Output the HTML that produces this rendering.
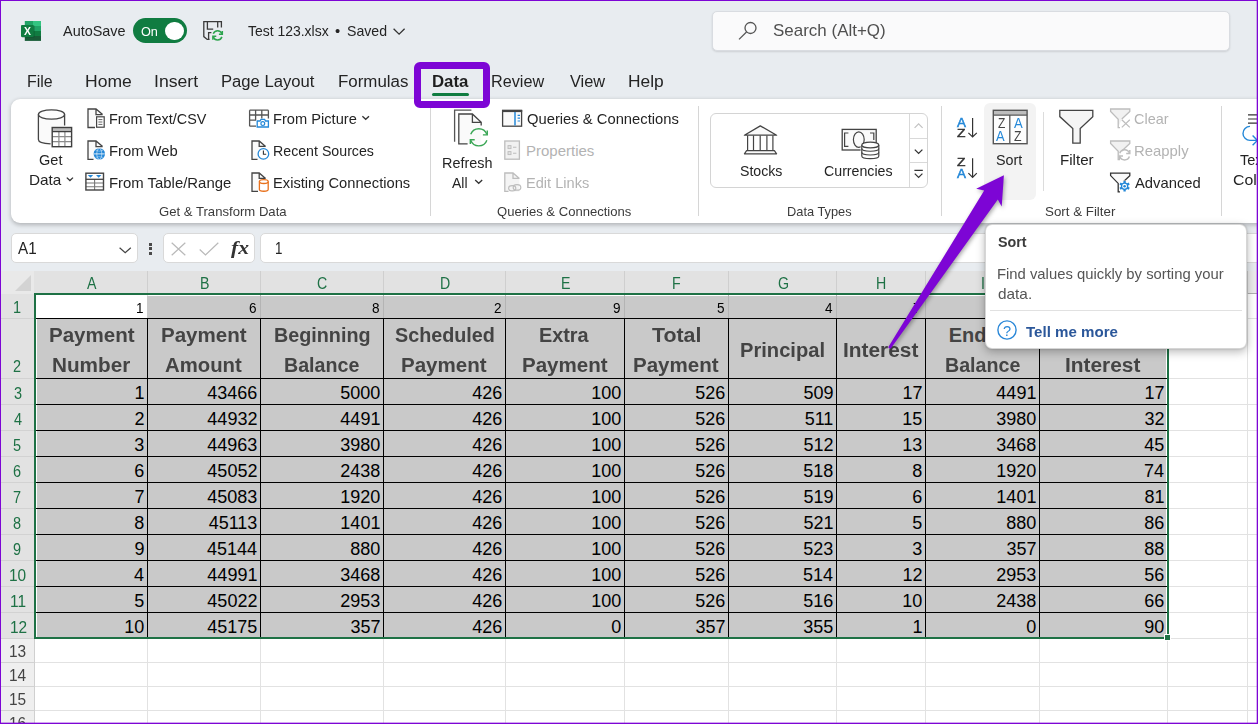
<!DOCTYPE html>
<html><head><meta charset="utf-8"><title>Excel</title>
<style>
html,body{margin:0;padding:0;}
body{width:1258px;height:724px;overflow:hidden;position:relative;background:#e8ecf0;font-family:"Liberation Sans",sans-serif;}
.t{position:absolute;white-space:pre;line-height:1em;transform-origin:0 0;display:block;}
.b{position:absolute;box-sizing:border-box;display:block;}
svg{overflow:visible;}
</style></head><body>
<span class="t" style="left:62.50px;top:23px;font-size:15px;color:#242424;transform:scaleX(0.9624);">AutoSave</span>
<div class="b" style="left:133px;top:18px;width:54px;height:25px;background:#107c41;border-radius:12.5px;"></div>
<span class="t" style="left:141.13px;top:26px;font-size:12.5px;color:#fff;transform:scaleX(1.0146);">On</span>
<div class="b" style="left:165px;top:21.5px;width:18.5px;height:18.5px;background:#fff;border-radius:50%;"></div>
<span class="t" style="left:248.22px;top:23px;font-size:15px;color:#242424;transform:scaleX(0.9299);">Test 123.xlsx</span>
<span class="t" style="left:335.11px;top:23px;font-size:15px;color:#242424;transform:scaleX(0.9877);">•</span>
<span class="t" style="left:346.96px;top:23px;font-size:15px;color:#242424;transform:scaleX(0.9426);">Saved</span>
<svg class="b" style="left:392.6px;top:27.6px;" width="12" height="8" viewBox="0 0 12 8"><path d="M0.6 0.7 L6.1 6.2 L11.6 0.7" fill="none" stroke="#333" stroke-width="1.3"/></svg>
<div class="b" style="left:712px;top:11px;width:518px;height:39.5px;background:#fafafb;border:1px solid #d9dce1;border-radius:5px;box-shadow:0 1px 2px rgba(0,0,0,0.12);"></div>
<span class="t" style="left:773.24px;top:22px;font-size:17px;color:#505050;transform:scaleX(0.9984);">Search (Alt+Q)</span>
<span class="t" style="left:27.43px;top:74px;font-size:16px;color:#242424;transform:scaleX(0.9941);">File</span>
<span class="t" style="left:84.60px;top:74px;font-size:16px;color:#242424;transform:scaleX(1.0953);">Home</span>
<span class="t" style="left:154.01px;top:74px;font-size:16px;color:#242424;transform:scaleX(1.1019);">Insert</span>
<span class="t" style="left:221.17px;top:74px;font-size:16px;color:#242424;transform:scaleX(1.0398);">Page Layout</span>
<span class="t" style="left:338.15px;top:74px;font-size:16px;color:#242424;transform:scaleX(1.0558);">Formulas</span>
<span class="t" style="left:431.51px;top:74px;font-size:16px;color:#1f1f1f;font-weight:bold;transform:scaleX(1.0486);">Data</span>
<span class="t" style="left:491.10px;top:74px;font-size:16px;color:#242424;transform:scaleX(1.0137);">Review</span>
<span class="t" style="left:569.62px;top:74px;font-size:16px;color:#242424;transform:scaleX(1.0227);">View</span>
<span class="t" style="left:628.41px;top:74px;font-size:16px;color:#242424;transform:scaleX(1.0853);">Help</span>
<div class="b" style="left:11px;top:99px;width:1260px;height:123.5px;background:#fff;border-radius:9px;box-shadow:0 1.5px 4px rgba(0,0,0,0.24);"></div>
<div class="b" style="left:432px;top:93px;width:36.5px;height:3.4px;background:#107c41;border-radius:2px;"></div>
<div class="b" style="left:414px;top:62px;width:76px;height:46px;border:7.5px solid #7d05d5;border-radius:6px;"></div>
<div class="b" style="left:430px;top:108px;width:1px;height:108px;background:#d6d6d6;"></div>
<div class="b" style="left:698px;top:106px;width:1px;height:110px;background:#d6d6d6;"></div>
<div class="b" style="left:941px;top:106px;width:1px;height:110px;background:#d6d6d6;"></div>
<div class="b" style="left:1221px;top:106px;width:1px;height:110px;background:#d6d6d6;"></div>
<div class="b" style="left:1043px;top:112px;width:1px;height:79px;background:#dcdcdc;"></div>
<span class="t" style="left:159.14px;top:205px;font-size:13px;color:#3b3b3b;transform:scaleX(1.0092);">Get &amp; Transform Data</span>
<span class="t" style="left:496.91px;top:205px;font-size:13px;color:#3b3b3b;transform:scaleX(1.0048);">Queries &amp; Connections</span>
<span class="t" style="left:787.28px;top:205px;font-size:13px;color:#3b3b3b;transform:scaleX(0.9856);">Data Types</span>
<span class="t" style="left:1045.40px;top:205px;font-size:13px;color:#3b3b3b;transform:scaleX(1.0256);">Sort &amp; Filter</span>
<span class="t" style="left:39.47px;top:152px;font-size:15px;color:#242424;transform:scaleX(0.9689);">Get</span>
<span class="t" style="left:28.57px;top:172px;font-size:15px;color:#242424;transform:scaleX(1.0221);">Data</span>
<span class="t" style="left:109.25px;top:111px;font-size:15px;color:#242424;transform:scaleX(0.9601);">From Text/CSV</span>
<span class="t" style="left:109.22px;top:143px;font-size:15px;color:#242424;transform:scaleX(0.9860);">From Web</span>
<span class="t" style="left:109.21px;top:175px;font-size:15px;color:#242424;transform:scaleX(0.9928);">From Table/Range</span>
<span class="t" style="left:273.33px;top:111px;font-size:15px;color:#242424;transform:scaleX(0.9762);">From Picture</span>
<span class="t" style="left:273.37px;top:143px;font-size:15px;color:#242424;transform:scaleX(0.9457);">Recent Sources</span>
<span class="t" style="left:273.32px;top:175px;font-size:15px;color:#242424;transform:scaleX(0.9792);">Existing Connections</span>
<span class="t" style="left:442.05px;top:155px;font-size:15px;color:#242424;transform:scaleX(0.9603);">Refresh</span>
<span class="t" style="left:452.00px;top:175px;font-size:15px;color:#242424;transform:scaleX(0.9314);">All</span>
<span class="t" style="left:526.54px;top:111px;font-size:15px;color:#242424;transform:scaleX(0.9845);">Queries &amp; Connections</span>
<span class="t" style="left:526.00px;top:143px;font-size:15px;color:#b3b3b3;">Properties</span>
<span class="t" style="left:526.03px;top:175px;font-size:15px;color:#b3b3b3;transform:scaleX(0.9731);">Edit Links</span>
<div class="b" style="left:710px;top:113px;width:218px;height:75px;background:#fff;border:1px solid #d4d4d4;border-radius:6px;"></div>
<div class="b" style="left:909px;top:114px;width:1px;height:73px;background:#d9d9d9;"></div>
<div class="b" style="left:910px;top:138px;width:17px;height:1px;background:#d9d9d9;"></div>
<div class="b" style="left:910px;top:162px;width:17px;height:1px;background:#d9d9d9;"></div>
<span class="t" style="left:740.06px;top:163px;font-size:15px;color:#242424;transform:scaleX(0.9429);">Stocks</span>
<span class="t" style="left:824.49px;top:163px;font-size:15px;color:#242424;transform:scaleX(0.9460);">Currencies</span>
<div class="b" style="left:984px;top:102.5px;width:52px;height:97.5px;background:#f3f3f3;border-radius:6px;"></div>
<span class="t" style="left:995.86px;top:152px;font-size:15px;color:#242424;transform:scaleX(0.9551);">Sort</span>
<span class="t" style="left:1059.69px;top:152px;font-size:15px;color:#242424;transform:scaleX(1.0078);">Filter</span>
<span class="t" style="left:1134.48px;top:111px;font-size:15px;color:#b3b3b3;transform:scaleX(0.9634);">Clear</span>
<span class="t" style="left:1134.01px;top:143px;font-size:15px;color:#b3b3b3;transform:scaleX(0.9916);">Reapply</span>
<span class="t" style="left:1135.20px;top:175px;font-size:15px;color:#242424;transform:scaleX(0.9852);">Advanced</span>
<span class="t" style="left:1240.21px;top:152px;font-size:15px;color:#242424;transform:scaleX(0.9705);">Text to</span>
<span class="t" style="left:1233.11px;top:172px;font-size:15px;color:#242424;transform:scaleX(1.0553);">Columns</span>
<svg class="b" style="left:0;top:0;pointer-events:none" width="1258" height="724" viewBox="0 0 1258 724"><rect x="24.8" y="21" width="8.2" height="5" fill="#21a366"/><rect x="33" y="21" width="8" height="5" fill="#33c481"/><rect x="24.8" y="26" width="8.2" height="5" fill="#107c41"/><rect x="33" y="26" width="8" height="5" fill="#21a366"/><rect x="24.8" y="31" width="8.2" height="5" fill="#185c37"/><rect x="33" y="31" width="8" height="5" fill="#107c41"/><rect x="24.8" y="36" width="16.2" height="4.9" fill="#185c37"/><rect x="21.6" y="25.6" width="13" height="12" rx="1" fill="#0b4a2b" opacity="0.45"/><rect x="21" y="25" width="12.7" height="12" rx="1" fill="#107c41"/><path d="M221.4 27.6 V21.7 H203.8 V36.6 L207.2 39.4 H209.6 M207.4 21.7 V29.2 H213.2 M217.7 21.7 V27.6 M211.4 32.6 H208.6 V39.4" fill="none" stroke="#3a3a3a" stroke-width="1.3" /><path d="M213.28 33.73 A4.6 4.6 0 0 1 221.92 33.73 M221.92 36.87 A4.6 4.6 0 0 1 213.28 36.87" fill="none" stroke="#2da44e" stroke-width="1.5" /><path d="M222.32 30.93 V34.23 H218.92" fill="none" stroke="#2da44e" stroke-width="1.5" /><path d="M212.88 39.67 V36.37 H216.28" fill="none" stroke="#2da44e" stroke-width="1.5" /><circle cx="750.5" cy="28" r="5.5" fill="none" stroke="#555" stroke-width="1.3"/><path d="M746.5 32 L739 39.4" fill="none" stroke="#555" stroke-width="1.3" /><path d="M38.4 114.5 V139.6 C38.4 142 43.5 143.6 50.8 143.9 L64.6 125.5 V114.5 Z" fill="#fafafa" stroke="none"/><ellipse cx="51.5" cy="114.5" rx="13.1" ry="4.7" fill="#fcfcfc" stroke="#444" stroke-width="1.3"/><path d="M38.4 114.5 V139.6 C38.4 142 43.5 143.7 50.6 143.9 M64.6 114.5 V125.6" fill="none" stroke="#444" stroke-width="1.3" /><rect x="52.2" y="127.5" width="19.4" height="19.2" fill="#fff"/><rect x="52.2" y="127.5" width="19.4" height="4" fill="#bdbdbd"/><path d="M58.9 131.5 V146.7 M64.9 131.5 V146.7 M52.2 136.7 H71.6 M52.2 141.6 H71.6" fill="none" stroke="#8c8c8c" stroke-width="1.2" /><path d="M52.2 131.6 H71.6" fill="none" stroke="#3f3f3f" stroke-width="1.3" /><rect x="52.2" y="127.5" width="19.4" height="19.2" fill="none" stroke="#3f3f3f" stroke-width="1.4"/><path d="M88 109 H96.0 L102.6 114.6 V127.5 H88 Z" fill="#fafafa" stroke="none"/><path d="M95 127.5 H88 V109 H96.0 L102.6 114.6 M96.0 109 V114.6 H102.6" fill="none" stroke="#444" stroke-width="1.3" /><rect x="96.6" y="116.8" width="7.6" height="10.4" fill="#fff" stroke="#444" stroke-width="1.2"/><path d="M98.4 119.6 H102.4 M98.4 122 H102.4 M98.4 124.4 H102.4" fill="none" stroke="#666" stroke-width="1" /><path d="M88 141 H96.0 L102.6 146.6 V159.4 H88 Z" fill="#fafafa" stroke="none"/><path d="M93.5 159.4 H88 V141 H96.0 L102.6 146.6 M96.0 141 V146.6 H102.6" fill="none" stroke="#444" stroke-width="1.3" /><circle cx="99.3" cy="153.9" r="5.7" fill="#2488d8"/><path d="M93.8 153.9 H104.8" fill="none" stroke="#fff" stroke-width="0.9" opacity="0.9"/><path d="M95.6 150.4 Q99.3 152 103 150.4 M95.6 157.4 Q99.3 155.8 103 157.4" fill="none" stroke="#fff" stroke-width="0.6" opacity="0.6"/><ellipse cx="99.3" cy="153.9" rx="2.5" ry="5.5" fill="none" stroke="#fff" stroke-width="0.7" opacity="0.75"/><rect x="85.9" y="173.2" width="17.6" height="16.8" fill="#fff"/><path d="M85.9 183 H103.5 M85.9 186.7 H103.5 M94.6 179.3 V190" fill="none" stroke="#777" stroke-width="1.1" /><path d="M87.8 174.9 H93.2 L90.5 177.7 Z M96 174.9 H101.4 L98.7 177.7 Z" fill="#2488d8"/><path d="M85.9 179.3 H103.5" fill="none" stroke="#444" stroke-width="1.3" /><rect x="85.9" y="173.2" width="17.6" height="16.8" fill="none" stroke="#444" stroke-width="1.4"/><path d="M249.6 110.2 H268.4 M249.6 115 H268.4 M249.6 120.2 H256 M249.6 126.2 H256 M249.6 110.2 V126.2 M255.6 110.2 V120 M261.8 110.2 V118.5 M268.4 110.2 V118.5" fill="none" stroke="#555" stroke-width="1.3" /><path d="M257.2 121 H260 L261 119.4 H264.6 L265.6 121 H268.4 V127 H257.2 Z" fill="#fff" stroke="#2488d8" stroke-width="1.3"/><circle cx="262.8" cy="123.6" r="1.9" fill="none" stroke="#2488d8" stroke-width="1.2"/><path d="M252 141 H259.20000000000005 L265.6 146.4 V159.4 H252 Z" fill="#fafafa" stroke="none"/><path d="M257.5 159.4 H252 V141 H259.20000000000005 L265.6 146.4 M259.20000000000005 141 V146.4 H265.6" fill="none" stroke="#444" stroke-width="1.3" /><circle cx="263.4" cy="153.9" r="5.3" fill="#fff" stroke="#2488d8" stroke-width="1.3"/><path d="M263.4 150.6 V154.2 H266.2" fill="none" stroke="#333" stroke-width="1.1" /><path d="M252 173 H259.20000000000005 L265.6 178.4 V191.4 H252 Z" fill="#fafafa" stroke="none"/><path d="M258 191.4 H252 V173 H259.20000000000005 L265.6 178.4 M259.20000000000005 173 V178.4 H265.6" fill="none" stroke="#444" stroke-width="1.3" /><path d="M259.4 181.6 V189.6 C259.4 191.8 268.2 191.8 268.2 189.6 V181.6" fill="#fff" stroke="#e8711c" stroke-width="1.3"/><ellipse cx="263.8" cy="181.6" rx="4.4" ry="1.9" fill="#fff" stroke="#e8711c" stroke-width="1.3"/><path d="M362.4 116.2 L365.7 119.33500000000001 L369 116.2" fill="none" stroke="#333" stroke-width="1.3" /><path d="M66.8 177.6 L69.9 180.545 L73 177.6" fill="none" stroke="#333" stroke-width="1.3" /><path d="M475.2 180 L478.7 183.325 L482.2 180" fill="none" stroke="#333" stroke-width="1.3" /><path d="M471.4 110.2 H454.6 V141.8" fill="none" stroke="#555" stroke-width="1.3" /><path d="M458.8 114 H472.4 L481.2 122.4 V143.8 H458.8 Z" fill="#fafafa"/><path d="M467.6 143.8 H458.8 V114 H472.4 L481.2 122.4 V125.6 M472.4 114 V122.4 H481.2" fill="none" stroke="#444" stroke-width="1.3" /><path d="M470.72 134.36 A8.6 8.6 0 0 1 486.88 134.36 M486.88 140.24 A8.6 8.6 0 0 1 470.72 140.24" fill="none" stroke="#3aa655" stroke-width="1.4" /><path d="M487.28 130.56 V134.86 H482.88" fill="none" stroke="#3aa655" stroke-width="1.4" /><path d="M470.32 144.04 V139.74 H474.72" fill="none" stroke="#3aa655" stroke-width="1.4" /><rect x="502.6" y="110.4" width="19" height="15.8" fill="#fafafa" stroke="#444" stroke-width="1.3"/><path d="M502 111 H522.2" fill="none" stroke="#444" stroke-width="2.2" /><path d="M515 112 V125.6" fill="none" stroke="#2488d8" stroke-width="1.5" /><path d="M517.6 115.4 H520 M517.6 118.2 H520 M517.6 121 H520" fill="none" stroke="#2488d8" stroke-width="1.2" /><rect x="504.8" y="141" width="14.6" height="18.2" fill="#f1f1f1" stroke="#bdbdbd" stroke-width="1.3"/><rect x="508" y="145.6" width="3" height="3" fill="#e2e2e2" stroke="#bdbdbd" stroke-width="0.9"/><rect x="508" y="151.6" width="3" height="3" fill="#e2e2e2" stroke="#bdbdbd" stroke-width="0.9"/><path d="M513 147.2 H516.4 M513 153.2 H516.4" fill="none" stroke="#bdbdbd" stroke-width="1.1" /><path d="M504.8 173 H513.0 L519.4 178.4 V191.4 H504.8 Z" fill="#f4f4f4" stroke="none"/><path d="M508.5 191.4 H504.8 V173 H513.0 L519.4 178.4 M513.0 173 V178.4 H519.4" fill="none" stroke="#bdbdbd" stroke-width="1.3" /><ellipse cx="512.2" cy="188.2" rx="3.6" ry="2.6" fill="#f4f4f4" stroke="#bdbdbd" stroke-width="1.2"/><ellipse cx="517" cy="187.4" rx="3.8" ry="2.8" fill="none" stroke="#bdbdbd" stroke-width="1.2"/><path d="M744.4 135.2 L760.3 125.9 L776.6 135.2 Z" fill="#fafafa" stroke="#444" stroke-width="1.3" stroke-linejoin="round"/><path d="M747.6 135.4 V150.4 M753.5 135.4 V150.4 M760.2 135.4 V150.4 M766.9 135.4 V150.4 M772.9 135.4 V150.4" fill="none" stroke="#444" stroke-width="1.2" /><path d="M746.6 150.6 H774.4 L776.6 153.8 H744.4 Z" fill="#fafafa" stroke="#444" stroke-width="1.2" stroke-linejoin="round"/><rect x="842.2" y="129.4" width="34" height="20.6" fill="#fafafa" stroke="#444" stroke-width="1.3"/><path d="M848.4 133 H844.6 V146.4 H848.4 M870 133 H873.8 V140" fill="none" stroke="#444" stroke-width="1.2" /><ellipse cx="858.8" cy="139.6" rx="5.4" ry="7.8" fill="none" stroke="#444" stroke-width="1.2"/><path d="M861.8 145 V156 C861.8 159.6 878.8 159.6 878.8 156 V145 Z" fill="#fff" stroke="#fff" stroke-width="2.4"/><path d="M861.8 145 V156 C861.8 159.6 878.8 159.6 878.8 156 V145" fill="#fff" stroke="#444" stroke-width="1.2"/><path d="M861.8 148.6 C861.8 152.2 878.8 152.2 878.8 148.6 M861.8 152.3 C861.8 155.9 878.8 155.9 878.8 152.3" fill="none" stroke="#444" stroke-width="1.1" /><ellipse cx="870.3" cy="145" rx="8.5" ry="2.9" fill="#fff" stroke="#444" stroke-width="1.2"/><path d="M914.6 127.8 L918.6 123.8 L922.6 127.8" fill="none" stroke="#c2c2c2" stroke-width="1.2" /><path d="M914.8 149.6 L918.6 153.4 L922.4 149.6" fill="none" stroke="#333" stroke-width="1.3" /><path d="M914.4 170.4 H922.8 M914.8 173.6 L918.6 177.4 L922.4 173.6" fill="none" stroke="#333" stroke-width="1.2" /><path d="M972.6 118 V136.8 M968.4 132.8 L972.6 137 L976.8 132.8" fill="none" stroke="#333" stroke-width="1.2" /><path d="M972.6 158.2 V177.2 M968.4 173.2 L972.6 177.4 L976.8 173.2" fill="none" stroke="#333" stroke-width="1.2" /><rect x="993.3" y="110.3" width="33.8" height="33.4" fill="#fdfdfd"/><rect x="993.3" y="110.3" width="33.8" height="4.6" fill="#bdbdbd"/><path d="M993.3 115.2 H1027.1 M1009.8 115.2 V143.7" fill="none" stroke="#555" stroke-width="1.3" /><rect x="993.3" y="110.3" width="33.8" height="33.4" fill="none" stroke="#555" stroke-width="1.4"/><path d="M1059.8 110.4 H1092.8 V116.6 L1080.2 128.6 V143.2 H1072.8 V128.6 L1059.8 116.6 Z" fill="#f5f5f5" stroke="#444" stroke-width="1.3" stroke-linejoin="miter"/><path d="M1110.6 109 H1129.8 V111.2 L1121.6 119.4 L1118.1999999999998 127.6 V119.4 L1110.6 111.2 Z" fill="#f1f1f1" stroke="none"/><path d="M1121.8 119 L1129.8 111.4 V109 H1110.6 V111.4 L1118.1999999999998 119.2 V127.6 H1120.0" fill="none" stroke="#bdbdbd" stroke-width="1.3" /><path d="M1121.8 119.8 L1129.8 127.4 M1129.8 119.8 L1121.8 127.4" fill="none" stroke="#bdbdbd" stroke-width="1.2" /><path d="M1110.6 141 H1129.8 V143.2 L1121.6 151.4 L1118.1999999999998 159.6 V151.4 L1110.6 143.2 Z" fill="#f1f1f1" stroke="none"/><path d="M1121.8 151 L1129.8 143.4 V141 H1110.6 V143.4 L1118.1999999999998 151.2 V159.6 H1120.0" fill="none" stroke="#bdbdbd" stroke-width="1.3" /><path d="M1119.81 153.06 A5.1 5.1 0 0 1 1129.39 153.06 M1129.39 156.54 A5.1 5.1 0 0 1 1119.81 156.54" fill="none" stroke="#bdbdbd" stroke-width="1.5" /><path d="M1129.79 150.06 V153.56 H1126.19" fill="none" stroke="#bdbdbd" stroke-width="1.5" /><path d="M1119.41 159.54 V156.04 H1123.01" fill="none" stroke="#bdbdbd" stroke-width="1.5" /><path d="M1110.6 173.2 H1129.8 V175.39999999999998 L1121.6 183.6 L1118.1999999999998 191.79999999999998 V183.6 L1110.6 175.39999999999998 Z" fill="#fafafa" stroke="none"/><path d="M1121.8 183.2 L1129.8 175.6 V173.2 H1110.6 V175.6 L1118.1999999999998 183.39999999999998 V191.79999999999998 H1120.0" fill="none" stroke="#333" stroke-width="1.3" /><circle cx="1124.6" cy="186.2" r="5.6" fill="#fff"/><path d="M1126.51 187.30 L1129.19 188.85 M1124.60 188.40 L1124.60 191.50 M1122.69 187.30 L1120.01 188.85 M1122.69 185.10 L1120.01 183.55 M1124.60 184.00 L1124.60 180.90 M1126.51 185.10 L1129.19 183.55 " fill="none" stroke="#2488d8" stroke-width="2.3" /><circle cx="1124.6" cy="186.2" r="3.1" fill="#fff" stroke="#2488d8" stroke-width="1.3"/><circle cx="1124.6" cy="186.2" r="1.3" fill="#2488d8"/><path d="M1248 114.8 H1258 M1248 119 H1258 M1248 123.2 H1258" fill="none" stroke="#333" stroke-width="1.2" /><path d="M1250 126.4 A7 7 0 1 0 1250 140.4 H1257 M1252.6 135.6 L1257.4 140.4 L1252.6 145.2" fill="none" stroke="#2488d8" stroke-width="1.4" /></svg>
<span class="t" style="left:23.90px;top:26px;font-size:10.5px;color:#fff;font-weight:bold;transform:scaleX(0.9963);">X</span>
<span class="t" style="left:956.90px;top:117px;font-size:12.5px;color:#2488d8;transform:scaleX(1.0707);-webkit-text-stroke:0.5px #2488d8;">A</span>
<span class="t" style="left:956.79px;top:128px;font-size:11px;color:#333;transform:scaleX(1.2562);-webkit-text-stroke:0.5px #333;">Z</span>
<span class="t" style="left:956.79px;top:157px;font-size:11px;color:#333;transform:scaleX(1.2562);-webkit-text-stroke:0.5px #333;">Z</span>
<span class="t" style="left:956.90px;top:168px;font-size:12.5px;color:#2488d8;transform:scaleX(1.0707);-webkit-text-stroke:0.5px #2488d8;">A</span>
<span class="t" style="left:997.64px;top:117px;font-size:13.75px;color:#444;transform:scaleX(0.8727);">Z</span>
<span class="t" style="left:996.40px;top:130px;font-size:13.75px;color:#2488d8;transform:scaleX(0.9405);">A</span>
<span class="t" style="left:1013.70px;top:117px;font-size:13.75px;color:#2488d8;transform:scaleX(0.9515);">A</span>
<span class="t" style="left:1013.83px;top:130px;font-size:13.75px;color:#444;transform:scaleX(0.8992);">Z</span>
<div class="b" style="left:11px;top:233px;width:126.5px;height:30px;background:#fff;border:1px solid #d9d9d9;border-radius:5px;"></div>
<span class="t" style="left:18.10px;top:241px;font-size:15.75px;color:#242424;transform:scaleX(0.9672);">A1</span>
<svg class="b" style="left:119px;top:247px;" width="13" height="7" viewBox="0 0 13 7"><path d="M0.6 0.7 L6.2 5.8 L11.8 0.7" fill="none" stroke="#444" stroke-width="1.2"/></svg>
<div class="b" style="left:149px;top:242.6px;width:3px;height:3px;background:#4a4a4a;"></div>
<div class="b" style="left:149px;top:247.2px;width:3px;height:3px;background:#4a4a4a;"></div>
<div class="b" style="left:149px;top:251.8px;width:3px;height:3px;background:#4a4a4a;"></div>
<div class="b" style="left:163px;top:233px;width:91.5px;height:30px;background:#fff;border:1px solid #d9d9d9;border-radius:5px;"></div>
<svg class="b" style="left:171px;top:241.5px;" width="15" height="14" viewBox="0 0 15 14"><path d="M0.7 0.7 L14.3 13.3 M14.3 0.7 L0.7 13.3" fill="none" stroke="#b9b9b9" stroke-width="1.2"/></svg>
<svg class="b" style="left:199px;top:241.5px;" width="20" height="14" viewBox="0 0 20 14"><path d="M0.7 7.5 L6.5 13 L19.3 0.8" fill="none" stroke="#b9b9b9" stroke-width="1.2"/></svg>
<span class="t" style="left:230.50px;top:238px;font-size:19px;color:#333;font-weight:bold;font-style:italic;font-family:'Liberation Serif',serif;transform:scaleX(1.1371);">fx</span>
<div class="b" style="left:260px;top:233px;width:1010px;height:30px;background:#fff;border:1px solid #d9d9d9;border-radius:5px;"></div>
<span class="t" style="left:274.50px;top:241px;font-size:15.75px;color:#242424;transform:scaleX(0.8466);">1</span>
<div class="b" style="left:1px;top:271px;width:1256px;height:460px;background:#fff;"></div>
<div class="b" style="left:1px;top:271px;width:1256px;height:23px;background:#e2e2e2;"></div>
<div class="b" style="left:1168px;top:271px;width:100px;height:23px;background:#ebebeb;"></div>
<div class="b" style="left:1169px;top:293px;width:100px;height:1px;background:#b0b0b0;"></div>
<div class="b" style="left:1px;top:294px;width:33px;height:344px;background:#e2e2e2;"></div>
<div class="b" style="left:1px;top:638px;width:33px;height:100px;background:#efefef;"></div>
<div class="b" style="left:1px;top:271px;width:33px;height:23px;background:#e9e9e9;"></div>
<svg class="b" style="left:15px;top:275px;" width="16" height="16" viewBox="0 0 16 16"><path d="M16 0 L16 16 L0 16 Z" fill="#d3d3d3"/></svg>
<div class="b" style="left:147px;top:294px;width:1px;height:440px;background:#e2e2e2;"></div>
<div class="b" style="left:260px;top:294px;width:1px;height:440px;background:#e2e2e2;"></div>
<div class="b" style="left:383px;top:294px;width:1px;height:440px;background:#e2e2e2;"></div>
<div class="b" style="left:505px;top:294px;width:1px;height:440px;background:#e2e2e2;"></div>
<div class="b" style="left:624px;top:294px;width:1px;height:440px;background:#e2e2e2;"></div>
<div class="b" style="left:728px;top:294px;width:1px;height:440px;background:#e2e2e2;"></div>
<div class="b" style="left:836px;top:294px;width:1px;height:440px;background:#e2e2e2;"></div>
<div class="b" style="left:925px;top:294px;width:1px;height:440px;background:#e2e2e2;"></div>
<div class="b" style="left:1039px;top:294px;width:1px;height:440px;background:#e2e2e2;"></div>
<div class="b" style="left:1167px;top:294px;width:1px;height:440px;background:#e2e2e2;"></div>
<div class="b" style="left:1247px;top:294px;width:1px;height:440px;background:#e2e2e2;"></div>
<div class="b" style="left:34px;top:318px;width:1230px;height:1px;background:#e2e2e2;"></div>
<div class="b" style="left:34px;top:378px;width:1230px;height:1px;background:#e2e2e2;"></div>
<div class="b" style="left:34px;top:404px;width:1230px;height:1px;background:#e2e2e2;"></div>
<div class="b" style="left:34px;top:430px;width:1230px;height:1px;background:#e2e2e2;"></div>
<div class="b" style="left:34px;top:456px;width:1230px;height:1px;background:#e2e2e2;"></div>
<div class="b" style="left:34px;top:482px;width:1230px;height:1px;background:#e2e2e2;"></div>
<div class="b" style="left:34px;top:508px;width:1230px;height:1px;background:#e2e2e2;"></div>
<div class="b" style="left:34px;top:534px;width:1230px;height:1px;background:#e2e2e2;"></div>
<div class="b" style="left:34px;top:560px;width:1230px;height:1px;background:#e2e2e2;"></div>
<div class="b" style="left:34px;top:586px;width:1230px;height:1px;background:#e2e2e2;"></div>
<div class="b" style="left:34px;top:612px;width:1230px;height:1px;background:#e2e2e2;"></div>
<div class="b" style="left:34px;top:638px;width:1230px;height:1px;background:#e2e2e2;"></div>
<div class="b" style="left:34px;top:662px;width:1230px;height:1px;background:#e2e2e2;"></div>
<div class="b" style="left:34px;top:686px;width:1230px;height:1px;background:#e2e2e2;"></div>
<div class="b" style="left:34px;top:710px;width:1230px;height:1px;background:#e2e2e2;"></div>
<div class="b" style="left:147px;top:271px;width:1px;height:23px;background:#cfcfcf;"></div>
<div class="b" style="left:260px;top:271px;width:1px;height:23px;background:#cfcfcf;"></div>
<div class="b" style="left:383px;top:271px;width:1px;height:23px;background:#cfcfcf;"></div>
<div class="b" style="left:505px;top:271px;width:1px;height:23px;background:#cfcfcf;"></div>
<div class="b" style="left:624px;top:271px;width:1px;height:23px;background:#cfcfcf;"></div>
<div class="b" style="left:728px;top:271px;width:1px;height:23px;background:#cfcfcf;"></div>
<div class="b" style="left:836px;top:271px;width:1px;height:23px;background:#cfcfcf;"></div>
<div class="b" style="left:925px;top:271px;width:1px;height:23px;background:#cfcfcf;"></div>
<div class="b" style="left:1039px;top:271px;width:1px;height:23px;background:#cfcfcf;"></div>
<div class="b" style="left:1167px;top:271px;width:1px;height:23px;background:#cfcfcf;"></div>
<div class="b" style="left:1247px;top:271px;width:1px;height:23px;background:#cfcfcf;"></div>
<div class="b" style="left:1px;top:318px;width:33px;height:1px;background:#d2d2d2;"></div>
<div class="b" style="left:1px;top:378px;width:33px;height:1px;background:#d2d2d2;"></div>
<div class="b" style="left:1px;top:404px;width:33px;height:1px;background:#d2d2d2;"></div>
<div class="b" style="left:1px;top:430px;width:33px;height:1px;background:#d2d2d2;"></div>
<div class="b" style="left:1px;top:456px;width:33px;height:1px;background:#d2d2d2;"></div>
<div class="b" style="left:1px;top:482px;width:33px;height:1px;background:#d2d2d2;"></div>
<div class="b" style="left:1px;top:508px;width:33px;height:1px;background:#d2d2d2;"></div>
<div class="b" style="left:1px;top:534px;width:33px;height:1px;background:#d2d2d2;"></div>
<div class="b" style="left:1px;top:560px;width:33px;height:1px;background:#d2d2d2;"></div>
<div class="b" style="left:1px;top:586px;width:33px;height:1px;background:#d2d2d2;"></div>
<div class="b" style="left:1px;top:612px;width:33px;height:1px;background:#d2d2d2;"></div>
<div class="b" style="left:1px;top:638px;width:33px;height:1px;background:#d2d2d2;"></div>
<div class="b" style="left:1px;top:662px;width:33px;height:1px;background:#d2d2d2;"></div>
<div class="b" style="left:1px;top:686px;width:33px;height:1px;background:#d2d2d2;"></div>
<div class="b" style="left:1px;top:710px;width:33px;height:1px;background:#d2d2d2;"></div>
<div class="b" style="left:37px;top:296px;width:1129px;height:341px;background:#c9c9c9;"></div>
<div class="b" style="left:36px;top:295px;width:111px;height:23px;background:#fff;"></div>
<div class="b" style="left:260px;top:295px;width:1px;height:23px;background:#b4b4b4;"></div>
<div class="b" style="left:383px;top:295px;width:1px;height:23px;background:#b4b4b4;"></div>
<div class="b" style="left:505px;top:295px;width:1px;height:23px;background:#b4b4b4;"></div>
<div class="b" style="left:624px;top:295px;width:1px;height:23px;background:#b4b4b4;"></div>
<div class="b" style="left:728px;top:295px;width:1px;height:23px;background:#b4b4b4;"></div>
<div class="b" style="left:836px;top:295px;width:1px;height:23px;background:#b4b4b4;"></div>
<div class="b" style="left:925px;top:295px;width:1px;height:23px;background:#b4b4b4;"></div>
<div class="b" style="left:1039px;top:295px;width:1px;height:23px;background:#b4b4b4;"></div>
<div class="b" style="left:36px;top:318px;width:1131px;height:1px;background:#000;"></div>
<div class="b" style="left:36px;top:378px;width:1131px;height:1px;background:#000;"></div>
<div class="b" style="left:36px;top:404px;width:1131px;height:1px;background:#000;"></div>
<div class="b" style="left:36px;top:430px;width:1131px;height:1px;background:#000;"></div>
<div class="b" style="left:36px;top:456px;width:1131px;height:1px;background:#000;"></div>
<div class="b" style="left:36px;top:482px;width:1131px;height:1px;background:#000;"></div>
<div class="b" style="left:36px;top:508px;width:1131px;height:1px;background:#000;"></div>
<div class="b" style="left:36px;top:534px;width:1131px;height:1px;background:#000;"></div>
<div class="b" style="left:36px;top:560px;width:1131px;height:1px;background:#000;"></div>
<div class="b" style="left:36px;top:586px;width:1131px;height:1px;background:#000;"></div>
<div class="b" style="left:36px;top:612px;width:1131px;height:1px;background:#000;"></div>
<div class="b" style="left:147px;top:318px;width:1px;height:320px;background:#000;"></div>
<div class="b" style="left:260px;top:318px;width:1px;height:320px;background:#000;"></div>
<div class="b" style="left:383px;top:318px;width:1px;height:320px;background:#000;"></div>
<div class="b" style="left:505px;top:318px;width:1px;height:320px;background:#000;"></div>
<div class="b" style="left:624px;top:318px;width:1px;height:320px;background:#000;"></div>
<div class="b" style="left:728px;top:318px;width:1px;height:320px;background:#000;"></div>
<div class="b" style="left:836px;top:318px;width:1px;height:320px;background:#000;"></div>
<div class="b" style="left:925px;top:318px;width:1px;height:320px;background:#000;"></div>
<div class="b" style="left:1039px;top:318px;width:1px;height:320px;background:#000;"></div>
<div class="b" style="left:34px;top:293px;width:1135px;height:2px;background:#1e7145;"></div>
<div class="b" style="left:34px;top:293px;width:2px;height:346px;background:#1e7145;"></div>
<div class="b" style="left:34px;top:637px;width:1132px;height:2px;background:#1e7145;"></div>
<div class="b" style="left:1167px;top:293px;width:2px;height:343px;background:#1e7145;"></div>
<div class="b" style="left:1164px;top:634px;width:7px;height:7px;background:#1e7145;border:1px solid #fff;"></div>
<span class="t" style="left:86.79px;top:276px;font-size:15.75px;color:#1e7145;transform:scaleX(0.9000);">A</span>
<span class="t" style="left:199.57px;top:276px;font-size:15.75px;color:#1e7145;transform:scaleX(0.9000);">B</span>
<span class="t" style="left:317.29px;top:276px;font-size:15.75px;color:#1e7145;transform:scaleX(0.9000);">C</span>
<span class="t" style="left:439.65px;top:276px;font-size:15.75px;color:#1e7145;transform:scaleX(0.9000);">D</span>
<span class="t" style="left:560.50px;top:276px;font-size:15.75px;color:#1e7145;transform:scaleX(0.9000);">E</span>
<span class="t" style="left:672.39px;top:276px;font-size:15.75px;color:#1e7145;transform:scaleX(0.9000);">F</span>
<span class="t" style="left:777.65px;top:276px;font-size:15.75px;color:#1e7145;transform:scaleX(0.9000);">G</span>
<span class="t" style="left:876.40px;top:276px;font-size:15.75px;color:#1e7145;transform:scaleX(0.9000);">H</span>
<span class="t" style="left:981.05px;top:276px;font-size:15.75px;color:#1e7145;transform:scaleX(0.9000);">I</span>
<span class="t" style="left:1100.88px;top:276px;font-size:15.75px;color:#1e7145;transform:scaleX(0.9000);">J</span>
<span class="t" style="left:13.26px;top:300px;font-size:15.75px;color:#1e7145;transform:scaleX(0.9200);">1</span>
<span class="t" style="left:13.44px;top:359px;font-size:15.75px;color:#1e7145;transform:scaleX(0.9200);">2</span>
<span class="t" style="left:13.52px;top:386px;font-size:15.75px;color:#1e7145;transform:scaleX(0.9200);">3</span>
<span class="t" style="left:13.52px;top:412px;font-size:15.75px;color:#1e7145;transform:scaleX(0.9200);">4</span>
<span class="t" style="left:13.48px;top:438px;font-size:15.75px;color:#1e7145;transform:scaleX(0.9200);">5</span>
<span class="t" style="left:13.41px;top:464px;font-size:15.75px;color:#1e7145;transform:scaleX(0.9200);">6</span>
<span class="t" style="left:13.44px;top:490px;font-size:15.75px;color:#1e7145;transform:scaleX(0.9200);">7</span>
<span class="t" style="left:13.48px;top:516px;font-size:15.75px;color:#1e7145;transform:scaleX(0.9200);">8</span>
<span class="t" style="left:13.48px;top:542px;font-size:15.75px;color:#1e7145;transform:scaleX(0.9200);">9</span>
<span class="t" style="left:9.42px;top:568px;font-size:15.75px;color:#1e7145;transform:scaleX(0.9800);">10</span>
<span class="t" style="left:10.08px;top:594px;font-size:15.75px;color:#1e7145;transform:scaleX(0.9800);">11</span>
<span class="t" style="left:9.50px;top:620px;font-size:15.75px;color:#1e7145;transform:scaleX(0.9800);">12</span>
<span class="t" style="left:9.46px;top:644px;font-size:15.75px;color:#444;transform:scaleX(0.9800);">13</span>
<span class="t" style="left:9.35px;top:668px;font-size:15.75px;color:#444;transform:scaleX(0.9800);">14</span>
<span class="t" style="left:9.46px;top:692px;font-size:15.75px;color:#444;transform:scaleX(0.9800);">15</span>
<span class="t" style="left:9.46px;top:716px;font-size:15.75px;color:#444;transform:scaleX(0.9800);">16</span>
<div class="b" style="left:34px;top:639px;width:1px;height:100px;background:#d0d0d0;"></div>
<span class="t" style="left:136.30px;top:301px;font-size:14.25px;color:#000;transform:scaleX(0.9500);">1</span>
<span class="t" style="left:249.23px;top:301px;font-size:14.25px;color:#000;transform:scaleX(0.9500);">6</span>
<span class="t" style="left:372.23px;top:301px;font-size:14.25px;color:#000;transform:scaleX(0.9500);">8</span>
<span class="t" style="left:494.30px;top:301px;font-size:14.25px;color:#000;transform:scaleX(0.9500);">2</span>
<span class="t" style="left:613.30px;top:301px;font-size:14.25px;color:#000;transform:scaleX(0.9500);">9</span>
<span class="t" style="left:717.23px;top:301px;font-size:14.25px;color:#000;transform:scaleX(0.9500);">5</span>
<span class="t" style="left:825.03px;top:301px;font-size:14.25px;color:#000;transform:scaleX(0.9500);">4</span>
<span class="t" style="left:913.10px;top:301px;font-size:14.25px;color:#000;transform:scaleX(0.9500);">7</span>
<span class="t" style="left:48.66px;top:325px;font-size:20px;color:#444444;font-weight:bold;transform:scaleX(1.0270);">Payment</span>
<span class="t" style="left:52.32px;top:355px;font-size:20px;color:#444444;font-weight:bold;transform:scaleX(1.0360);">Number</span>
<span class="t" style="left:160.66px;top:325px;font-size:20px;color:#444444;font-weight:bold;transform:scaleX(1.0270);">Payment</span>
<span class="t" style="left:165.49px;top:355px;font-size:20px;color:#444444;font-weight:bold;transform:scaleX(1.0160);">Amount</span>
<span class="t" style="left:273.79px;top:325px;font-size:20px;color:#444444;font-weight:bold;transform:scaleX(0.9870);">Beginning</span>
<span class="t" style="left:284.00px;top:355px;font-size:20px;color:#444444;font-weight:bold;transform:scaleX(0.9820);">Balance</span>
<span class="t" style="left:394.90px;top:325px;font-size:20px;color:#444444;font-weight:bold;transform:scaleX(0.9880);">Scheduled</span>
<span class="t" style="left:401.16px;top:355px;font-size:20px;color:#444444;font-weight:bold;transform:scaleX(1.0270);">Payment</span>
<span class="t" style="left:539.46px;top:325px;font-size:20px;color:#444444;font-weight:bold;transform:scaleX(0.9920);">Extra</span>
<span class="t" style="left:521.66px;top:355px;font-size:20px;color:#444444;font-weight:bold;transform:scaleX(1.0270);">Payment</span>
<span class="t" style="left:652.44px;top:325px;font-size:20px;color:#444444;font-weight:bold;transform:scaleX(1.0670);">Total</span>
<span class="t" style="left:633.16px;top:355px;font-size:20px;color:#444444;font-weight:bold;transform:scaleX(1.0270);">Payment</span>
<span class="t" style="left:740.05px;top:340px;font-size:20px;color:#444444;font-weight:bold;transform:scaleX(1.0060);">Principal</span>
<span class="t" style="left:842.74px;top:340px;font-size:20px;color:#444444;font-weight:bold;transform:scaleX(1.0440);">Interest</span>
<span class="t" style="left:948.65px;top:325px;font-size:20px;color:#444444;font-weight:bold;">Ending</span>
<span class="t" style="left:944.50px;top:355px;font-size:20px;color:#444444;font-weight:bold;transform:scaleX(0.9820);">Balance</span>
<span class="t" style="left:1049.50px;top:325px;font-size:20px;color:#444444;font-weight:bold;">Cumulative</span>
<span class="t" style="left:1065.24px;top:355px;font-size:20px;color:#444444;font-weight:bold;transform:scaleX(1.0440);">Interest</span>
<span class="t" style="left:134.42px;top:384px;font-size:18px;color:#000;">1</span>
<span class="t" style="left:207.28px;top:384px;font-size:18px;color:#000;">43466</span>
<span class="t" style="left:340.18px;top:384px;font-size:18px;color:#000;">5000</span>
<span class="t" style="left:472.35px;top:384px;font-size:18px;color:#000;">426</span>
<span class="t" style="left:591.26px;top:384px;font-size:18px;color:#000;">100</span>
<span class="t" style="left:695.35px;top:384px;font-size:18px;color:#000;">526</span>
<span class="t" style="left:803.44px;top:384px;font-size:18px;color:#000;">509</span>
<span class="t" style="left:902.43px;top:384px;font-size:18px;color:#000;">17</span>
<span class="t" style="left:996.36px;top:384px;font-size:18px;color:#000;">4491</span>
<span class="t" style="left:1144.43px;top:384px;font-size:18px;color:#000;">17</span>
<span class="t" style="left:134.42px;top:410px;font-size:18px;color:#000;">2</span>
<span class="t" style="left:207.37px;top:410px;font-size:18px;color:#000;">44932</span>
<span class="t" style="left:340.36px;top:410px;font-size:18px;color:#000;">4491</span>
<span class="t" style="left:472.35px;top:410px;font-size:18px;color:#000;">426</span>
<span class="t" style="left:591.26px;top:410px;font-size:18px;color:#000;">100</span>
<span class="t" style="left:695.35px;top:410px;font-size:18px;color:#000;">526</span>
<span class="t" style="left:804.70px;top:410px;font-size:18px;color:#000;">511</span>
<span class="t" style="left:902.34px;top:410px;font-size:18px;color:#000;">15</span>
<span class="t" style="left:996.18px;top:410px;font-size:18px;color:#000;">3980</span>
<span class="t" style="left:1144.43px;top:410px;font-size:18px;color:#000;">32</span>
<span class="t" style="left:134.33px;top:436px;font-size:18px;color:#000;">3</span>
<span class="t" style="left:207.28px;top:436px;font-size:18px;color:#000;">44963</span>
<span class="t" style="left:340.18px;top:436px;font-size:18px;color:#000;">3980</span>
<span class="t" style="left:472.35px;top:436px;font-size:18px;color:#000;">426</span>
<span class="t" style="left:591.26px;top:436px;font-size:18px;color:#000;">100</span>
<span class="t" style="left:695.35px;top:436px;font-size:18px;color:#000;">526</span>
<span class="t" style="left:803.44px;top:436px;font-size:18px;color:#000;">512</span>
<span class="t" style="left:902.34px;top:436px;font-size:18px;color:#000;">13</span>
<span class="t" style="left:996.27px;top:436px;font-size:18px;color:#000;">3468</span>
<span class="t" style="left:1144.34px;top:436px;font-size:18px;color:#000;">45</span>
<span class="t" style="left:134.33px;top:462px;font-size:18px;color:#000;">6</span>
<span class="t" style="left:207.37px;top:462px;font-size:18px;color:#000;">45052</span>
<span class="t" style="left:340.27px;top:462px;font-size:18px;color:#000;">2438</span>
<span class="t" style="left:472.35px;top:462px;font-size:18px;color:#000;">426</span>
<span class="t" style="left:591.26px;top:462px;font-size:18px;color:#000;">100</span>
<span class="t" style="left:695.35px;top:462px;font-size:18px;color:#000;">526</span>
<span class="t" style="left:803.35px;top:462px;font-size:18px;color:#000;">518</span>
<span class="t" style="left:912.33px;top:462px;font-size:18px;color:#000;">8</span>
<span class="t" style="left:996.18px;top:462px;font-size:18px;color:#000;">1920</span>
<span class="t" style="left:1144.07px;top:462px;font-size:18px;color:#000;">74</span>
<span class="t" style="left:134.42px;top:488px;font-size:18px;color:#000;">7</span>
<span class="t" style="left:207.28px;top:488px;font-size:18px;color:#000;">45083</span>
<span class="t" style="left:340.18px;top:488px;font-size:18px;color:#000;">1920</span>
<span class="t" style="left:472.35px;top:488px;font-size:18px;color:#000;">426</span>
<span class="t" style="left:591.26px;top:488px;font-size:18px;color:#000;">100</span>
<span class="t" style="left:695.35px;top:488px;font-size:18px;color:#000;">526</span>
<span class="t" style="left:803.44px;top:488px;font-size:18px;color:#000;">519</span>
<span class="t" style="left:912.33px;top:488px;font-size:18px;color:#000;">6</span>
<span class="t" style="left:996.36px;top:488px;font-size:18px;color:#000;">1401</span>
<span class="t" style="left:1144.43px;top:488px;font-size:18px;color:#000;">81</span>
<span class="t" style="left:134.33px;top:514px;font-size:18px;color:#000;">8</span>
<span class="t" style="left:208.63px;top:514px;font-size:18px;color:#000;">45113</span>
<span class="t" style="left:340.36px;top:514px;font-size:18px;color:#000;">1401</span>
<span class="t" style="left:472.35px;top:514px;font-size:18px;color:#000;">426</span>
<span class="t" style="left:591.26px;top:514px;font-size:18px;color:#000;">100</span>
<span class="t" style="left:695.35px;top:514px;font-size:18px;color:#000;">526</span>
<span class="t" style="left:803.44px;top:514px;font-size:18px;color:#000;">521</span>
<span class="t" style="left:912.33px;top:514px;font-size:18px;color:#000;">5</span>
<span class="t" style="left:1006.26px;top:514px;font-size:18px;color:#000;">880</span>
<span class="t" style="left:1144.34px;top:514px;font-size:18px;color:#000;">86</span>
<span class="t" style="left:134.42px;top:540px;font-size:18px;color:#000;">9</span>
<span class="t" style="left:207.01px;top:540px;font-size:18px;color:#000;">45144</span>
<span class="t" style="left:350.26px;top:540px;font-size:18px;color:#000;">880</span>
<span class="t" style="left:472.35px;top:540px;font-size:18px;color:#000;">426</span>
<span class="t" style="left:591.26px;top:540px;font-size:18px;color:#000;">100</span>
<span class="t" style="left:695.35px;top:540px;font-size:18px;color:#000;">526</span>
<span class="t" style="left:803.35px;top:540px;font-size:18px;color:#000;">523</span>
<span class="t" style="left:912.33px;top:540px;font-size:18px;color:#000;">3</span>
<span class="t" style="left:1006.44px;top:540px;font-size:18px;color:#000;">357</span>
<span class="t" style="left:1144.34px;top:540px;font-size:18px;color:#000;">88</span>
<span class="t" style="left:134.06px;top:566px;font-size:18px;color:#000;">4</span>
<span class="t" style="left:207.37px;top:566px;font-size:18px;color:#000;">44991</span>
<span class="t" style="left:340.27px;top:566px;font-size:18px;color:#000;">3468</span>
<span class="t" style="left:472.35px;top:566px;font-size:18px;color:#000;">426</span>
<span class="t" style="left:591.26px;top:566px;font-size:18px;color:#000;">100</span>
<span class="t" style="left:695.35px;top:566px;font-size:18px;color:#000;">526</span>
<span class="t" style="left:803.08px;top:566px;font-size:18px;color:#000;">514</span>
<span class="t" style="left:902.43px;top:566px;font-size:18px;color:#000;">12</span>
<span class="t" style="left:996.27px;top:566px;font-size:18px;color:#000;">2953</span>
<span class="t" style="left:1144.34px;top:566px;font-size:18px;color:#000;">56</span>
<span class="t" style="left:134.33px;top:592px;font-size:18px;color:#000;">5</span>
<span class="t" style="left:207.37px;top:592px;font-size:18px;color:#000;">45022</span>
<span class="t" style="left:340.27px;top:592px;font-size:18px;color:#000;">2953</span>
<span class="t" style="left:472.35px;top:592px;font-size:18px;color:#000;">426</span>
<span class="t" style="left:591.26px;top:592px;font-size:18px;color:#000;">100</span>
<span class="t" style="left:695.35px;top:592px;font-size:18px;color:#000;">526</span>
<span class="t" style="left:803.35px;top:592px;font-size:18px;color:#000;">516</span>
<span class="t" style="left:902.25px;top:592px;font-size:18px;color:#000;">10</span>
<span class="t" style="left:996.27px;top:592px;font-size:18px;color:#000;">2438</span>
<span class="t" style="left:1144.34px;top:592px;font-size:18px;color:#000;">66</span>
<span class="t" style="left:124.25px;top:618px;font-size:18px;color:#000;">10</span>
<span class="t" style="left:207.28px;top:618px;font-size:18px;color:#000;">45175</span>
<span class="t" style="left:350.44px;top:618px;font-size:18px;color:#000;">357</span>
<span class="t" style="left:472.35px;top:618px;font-size:18px;color:#000;">426</span>
<span class="t" style="left:611.24px;top:618px;font-size:18px;color:#000;">0</span>
<span class="t" style="left:695.44px;top:618px;font-size:18px;color:#000;">357</span>
<span class="t" style="left:803.35px;top:618px;font-size:18px;color:#000;">355</span>
<span class="t" style="left:912.42px;top:618px;font-size:18px;color:#000;">1</span>
<span class="t" style="left:1026.24px;top:618px;font-size:18px;color:#000;">0</span>
<span class="t" style="left:1144.25px;top:618px;font-size:18px;color:#000;">90</span>
<div class="b" style="left:985px;top:224px;width:262px;height:125px;background:#fff;border:1px solid rgba(0,0,0,0.16);border-radius:7px;box-shadow:0 3px 10px rgba(0,0,0,0.28),0 0 2px rgba(0,0,0,0.2);"></div>
<span class="t" style="left:998.07px;top:235px;font-size:14.5px;color:#3c3c3c;font-weight:bold;transform:scaleX(0.9877);">Sort</span>
<span class="t" style="left:997.31px;top:267px;font-size:14.5px;color:#555;transform:scaleX(1.0225);">Find values quickly by sorting your</span>
<span class="t" style="left:997.89px;top:287px;font-size:14.5px;color:#555;transform:scaleX(1.0600);">data.</span>
<div class="b" style="left:990px;top:310px;width:252px;height:1px;background:#e1e1e1;"></div>
<svg class="b" style="left:997px;top:320px;" width="20" height="20" viewBox="0 0 20 20"><circle cx="10" cy="10" r="9.1" fill="none" stroke="#2b88d8" stroke-width="1.4"/></svg>
<span class="t" style="left:1003.02px;top:323px;font-size:15px;color:#2b88d8;transform:scaleX(0.9722);">?</span>
<span class="t" style="left:1026.35px;top:325px;font-size:14.5px;color:#2b579a;font-weight:bold;transform:scaleX(1.0399);">Tell me more</span>
<svg class="b" style="left:0px;top:0px;pointer-events:none;" width="1258" height="724" viewBox="0 0 1258 724"><polygon points="1003.9,175.2 976.2,188.8 984.2,190.6 888.2,347.2 889.2,348.6 890.8,348.6 997.8,199.5 1001.7,206.4" fill="#7d05d5" style="filter:drop-shadow(1px 2px 2px rgba(0,0,0,0.35))"/></svg>
<div class="b" style="left:0px;top:0px;width:1258px;height:724px;border:1px solid #7d05d5;"></div>
<div class="b" style="left:1256px;top:1px;width:1px;height:722px;background:#7d05d5;opacity:0.3;"></div>
<div class="b" style="left:1px;top:722px;width:1256px;height:1px;background:#7d05d5;opacity:0.35;"></div>
</body></html>
